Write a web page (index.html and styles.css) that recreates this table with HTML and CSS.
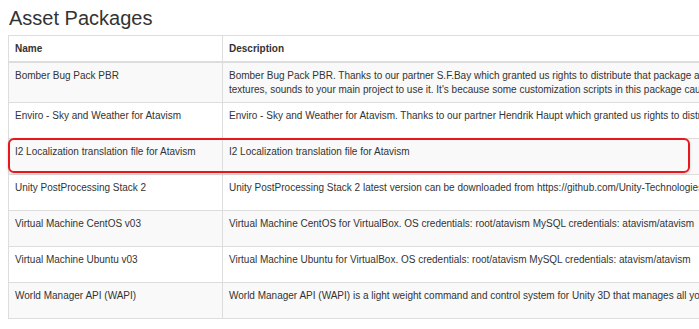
FILE: index.html
```html
<!DOCTYPE html>
<html lang="en">
<head>
<meta charset="utf-8">
<title>Asset Packages</title>
<link rel="stylesheet" href="styles.css">
</head>
<body>
<main class="page">
  <h3 class="page-title">Asset Packages</h3>
  <table class="packages">
    <colgroup>
      <col class="col-name">
      <col class="col-desc">
    </colgroup>
    <thead>
      <tr>
        <th>Name</th>
        <th>Description</th>
      </tr>
    </thead>
    <tbody>
      <tr>
        <td>Bomber Bug Pack PBR</td>
        <td>Bomber Bug Pack PBR. Thanks to our partner S.F.Bay which granted us rights to distribute that package along with Atavism. Please move all models, textures, sounds to your main project to use it. It's because some customization scripts in this package cause errors.</td>
      </tr>
      <tr>
        <td>Enviro - Sky and Weather for Atavism</td>
        <td>Enviro - Sky and Weather for Atavism. Thanks to our partner Hendrik Haupt which granted us rights to distribute it.</td>
      </tr>
      <tr>
        <td>I2 Localization translation file for Atavism</td>
        <td>I2 Localization translation file for Atavism</td>
      </tr>
      <tr>
        <td>Unity PostProcessing Stack 2</td>
        <td>Unity PostProcessing Stack 2 latest version can be downloaded from https://github.com/Unity-Technologies/PostProcessing</td>
      </tr>
      <tr>
        <td>Virtual Machine CentOS v03</td>
        <td>Virtual Machine CentOS for VirtualBox. OS credentials: root/atavism MySQL credentials: atavism/atavism</td>
      </tr>
      <tr>
        <td>Virtual Machine Ubuntu v03</td>
        <td>Virtual Machine Ubuntu for VirtualBox. OS credentials: root/atavism MySQL credentials: atavism/atavism</td>
      </tr>
      <tr>
        <td>World Manager API (WAPI)</td>
        <td>World Manager API (WAPI) is a light weight command and control system for Unity 3D that manages all your servers.</td>
      </tr>
    </tbody>
  </table>
  <div class="highlight" aria-hidden="true"></div>
</main>
</body>
</html>
```

FILE: styles.css
```css
html {
  overflow: hidden;
}

body {
  margin: 0;
  background: #ffffff;
  color: #333333;
  font-family: "Liberation Sans", Arial, sans-serif;
  font-size: 10px;
  line-height: 13.4px;
}

.page {
  position: relative;
  width: 940px;
  padding-top: 7px;
}

.page-title {
  margin: 0 0 6px 9px;
  font-size: 20px;
  font-weight: 400;
  line-height: 22px;
  color: #333333;
}

.packages {
  margin-left: 8px;
  width: 908px;
  table-layout: fixed;
  border-collapse: collapse;
  border: 1px solid #dddddd;
}

.col-name {
  width: 214px;
}

.col-desc {
  width: 694px;
}

.packages th,
.packages td {
  padding: 6px 6px;
  text-align: left;
  vertical-align: top;
  border: 1px solid #dddddd;
}

.packages th {
  font-weight: 700;
  border-bottom: 2px solid #dddddd;
}

.packages tbody tr {
  height: 36px;
}

.packages tbody tr:nth-child(odd) {
  background: #f9f9f9;
}

.highlight {
  position: absolute;
  left: 8px;
  top: 138px;
  width: 682px;
  height: 35px;
  box-sizing: border-box;
  border: 2px solid #e8171d;
  border-radius: 6px;
  box-shadow: 0 1px 3px rgba(0, 0, 0, 0.18);
  pointer-events: none;
}
```
